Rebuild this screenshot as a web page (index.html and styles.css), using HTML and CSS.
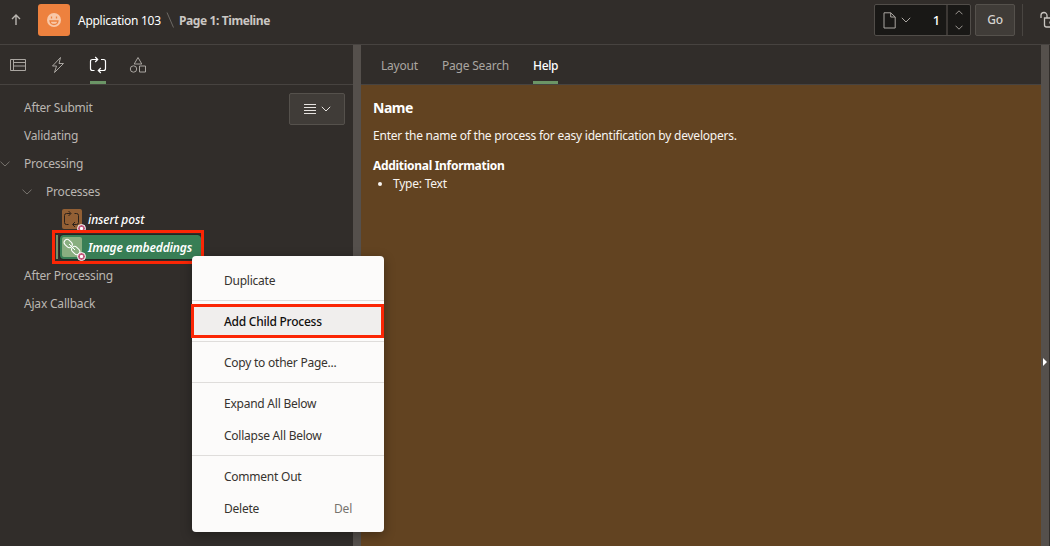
FILE: index.html
```html
<!DOCTYPE html>
<html lang="en">
<head>
<meta charset="utf-8">
<title>Page Designer</title>
<link rel="stylesheet" href="styles.css">
</head>
<body>
<div class="app">
  <header class="topbar">
    <svg class="up" width="12" height="14" viewBox="0 0 12 14"><path d="M6 12V2M2 6l4-4 4 4"/></svg>
    <span class="logo"><svg width="16" height="16" viewBox="0 0 16 16"><circle cx="8" cy="8" r="7" fill="#f8c8a8" stroke="none"/><path d="M5.500 4.500v2M10.500 4.500v2M4 9h8q-.5 3.500-4 3.500T4 9z" fill="none" stroke="#ed813e" stroke-width="1.300"/></svg></span>
    <span class="crumb app-name">Application 103</span>
    <svg class="slash" width="9" height="16" viewBox="0 0 9 16"><path d="M1 .5l6.500 15"/></svg>
    <span class="crumb page-name">Page 1: Timeline</span>
    <div class="picker">
      <span class="picker-main">
        <svg width="13" height="17" viewBox="0 0 13 17"><path d="M1 .8h6.700L12.200 5v11H1zM7.700.8V5h4.500"/></svg>
        <svg width="10" height="6" viewBox="0 0 10 6"><path d="M.8.8L5 5 9.200.8"/></svg>
        <b>1</b>
      </span>
      <span class="steps">
        <svg width="8" height="5" viewBox="0 0 8 5"><path d="M.5 4.300L4 .8l3.500 3.500"/></svg>
        <svg width="8" height="5" viewBox="0 0 8 5"><path d="M.5.7L4 4.200 7.500.7"/></svg>
      </span>
    </div>
    <button class="go">Go</button>
    <span class="divider"></span>
    <svg class="lock" width="17" height="18" viewBox="0 0 17 18"><path d="M1 7V4.500a3 3 0 0 1 6 0V7M4.500 7H16v9H6.500a2 2 0 0 1-2-2zM10 10.500v2"/></svg>
  </header>
  <main class="work">
    <section class="left">
      <nav class="icons">
        <span><svg width="16" height="12" viewBox="0 0 16 12"><path d="M.5.5h15v11H.5zM3.500.5v11M3.500 3.500h12"/><path d="M4 7h11" stroke-width="2" opacity=".5"/></svg></span>
        <span><svg width="16" height="18" viewBox="0 0 16 18"><path d="M10.500 1.500L2.500 10H6.500L4.500 16.500 13.500 7.500H9z"/></svg></span>
        <span class="on"><svg width="18" height="18" viewBox="0 0 18 18"><path d="M8.500 3.500H3.500q-2 0-2 2v7q0 2 2 2h2M12 3.500h2.500q2 0 2 2v7q0 2-2 2h-5M6.200 1L8.700 3.500 6.200 6M11.800 12L9.300 14.500l2.500 2.500" stroke-width="1.200"/></svg></span>
        <span><svg width="18" height="18" viewBox="0 0 18 18"><path d="M9 1.500L12.800 8H5.200z"/><circle cx="4.500" cy="13" r="3.200"/><path d="M10.500 10h6v6h-6z"/></svg></span>
      </nav>
      <div class="tree-wrap">
        <ul class="tree">
          <li>After Submit</li>
          <li>Validating</li>
          <li><svg class="caret" width="10" height="6" viewBox="0 0 10 6"><path d="M.5.7L5 5 9.500.7"/></svg>Processing</li>
          <li class="l2"><svg class="caret" width="10" height="6" viewBox="0 0 10 6"><path d="M.5.7L5 5 9.500.7"/></svg>Processes</li>
          <li class="l3"><span class="node"><span class="tile brown"><svg width="20" height="20" viewBox="0 0 20 20"><path d="M8.500 4.500H4.500q-2 0-2 2v7q0 2 2 2h2M12.500 4.500h2q2 0 2 2v7q0 2-2 2H11M6.500 2l2.500 2.500L6.500 7M13 13l-2.500 2.500L13 18"/></svg><i></i></span><em>insert post</em></span></li>
          <li class="l3"><span class="node sel"><span class="tile green"><svg width="20" height="20" viewBox="0 0 20 20"><rect x="1.700" y="3.500" width="9" height="6" rx="3" transform="rotate(45 6.200 6.500)"/><rect x="9.200" y="10.500" width="9" height="6" rx="3" transform="rotate(45 13.700 13.500)"/><path d="M7 7l6 6"/></svg><i></i></span><em>Image embeddings</em></span></li>
          <li>After Processing</li>
          <li>Ajax Callback</li>
        </ul>
        <button class="list-btn"><svg width="12" height="12" viewBox="0 0 12 12"><path d="M0 1.500h12M0 4.500h12M0 7.500h12M0 10.500h12" /></svg><svg width="10" height="6" viewBox="0 0 10 6"><path d="M.8.8L5 5 9.200.8"/></svg></button>
      </div>
    </section>
    <div class="split"></div>
    <section class="right">
      <nav class="tabs"><span>Layout</span><span>Page Search</span><span class="on">Help</span></nav>
      <article class="help">
        <h2>Name</h2>
        <p>Enter the name of the process for easy identification by developers.</p>
        <h3>Additional Information</h3>
        <ul><li>Type: Text</li></ul>
      </article>
    </section>
    <div class="split end"><svg width="4" height="8" viewBox="0 0 4 8"><path d="M0 0l4 4-4 4z"/></svg></div>
  </main>
</div>
<div class="mark mark-node"></div>
<div class="menu">
  <div class="item">Duplicate</div>
  <hr>
  <div class="item hot">Add Child Process</div>
  <hr>
  <div class="item">Copy to other Page...</div>
  <hr>
  <div class="item">Expand All Below</div>
  <div class="item">Collapse All Below</div>
  <hr>
  <div class="item">Comment Out</div>
  <div class="item">Delete<kbd>Del</kbd></div>
</div>
</body>
</html>
```

FILE: styles.css
```css
* { box-sizing: border-box; }
body { margin: 0; overflow: hidden; background: #312d2a; color: #bab6b1; font: 12px/28px "Noto Sans", "Open Sans", sans-serif; letter-spacing: -0.2px; }
svg { display: block; flex: none; fill: none; stroke: currentColor; }
button { font: inherit; letter-spacing: inherit; }
.app { width: 1050px; height: 546px; display: flex; flex-direction: column; overflow: hidden; }
.topbar { height: 45px; padding-bottom: 4px; flex: none; display: flex; align-items: center; border-bottom: 1px solid #474340; overflow: hidden; }
.up { margin-left: 10px; stroke-width: 1.4; }
.logo { width: 32px; height: 32px; margin-left: 16px; flex: none; border-radius: 3px; background: #ed813e; display: grid; place-items: center; }
.crumb { white-space: nowrap; padding-top: 1px; letter-spacing: -0.28px; }
.app-name { margin-left: 8px; width: 83px; color: #fff; }
.slash { margin: 0 4px 0 5px; color: #6d6965; }
.page-name { font-weight: 700; color: #cbc7c3; letter-spacing: -0.4px; }
.picker { width: 97px; height: 32px; margin-left: auto; display: flex; flex: none; border: 1px solid #514d49; border-radius: 2px; background: #191816; }
.picker-main { flex: 1; display: flex; align-items: center; padding: 0 6px 0 8px; color: #aaa6a1; }
.picker-main svg + svg { margin-left: 5px; }
.picker-main b { margin-left: auto; color: #fff; font-size: 13px; font-weight: 500; }
.steps { width: 24px; border-left: 2px solid #3c3835; display: flex; flex-direction: column; align-items: center; justify-content: space-between; padding: 5px 0; color: #9b9792; }
.go { width: 40px; height: 32px; margin-left: 4px; padding: 0; flex: none; border: 1px solid #55514c; border-radius: 2px; background: #403c38; color: #d7d4d0; font-weight: 500; }
.divider { width: 1px; height: 32px; margin-left: 7px; flex: none; background: #494541; }
.lock { margin: 0 -7px 0 17px; color: #c9c5c1; stroke-width: 1.3; }
.work { flex: 1; display: flex; min-height: 0; }
.left { width: 353px; flex: none; display: flex; flex-direction: column; }
.icons { height: 40px; flex: none; display: flex; gap: 24px; padding-left: 10px; border-bottom: 1px solid #474340; }
.icons span { width: 16px; display: flex; align-items: center; justify-content: center; color: #aaa6a1; }
.icons .on { color: #fff; border-bottom: 3px solid #6b9566; padding-top: 3px; }
.tree-wrap { display: flex; justify-content: space-between; padding: 8px 8px 0 0; }
.tree { list-style: none; margin: 0; padding: 0; }
.tree li { height: 28px; padding: 2px 0 0 24px; display: flex; align-items: center; white-space: nowrap; line-height: 26px; }
.tree .caret { margin: 0 14px 0 -24px; color: #77736e; }
.tree .l2 { padding-left: 46px; }
.tree .l3 { padding: 0 0 0 60px; line-height: 30px; }
.node { height: 24px; display: flex; align-items: center; padding: 0 9px 0 2px; border-radius: 3px; color: #fff; font-weight: 500; }
.node em { padding-top: 1px; letter-spacing: -0.1px; }
.sel { background: #387e55; outline: 1px solid #252320; font-weight: 600; }
.sel em { letter-spacing: -0.15px; }
.tile { width: 20px; height: 20px; margin-right: 6px; position: relative; border-radius: 2px; }
.brown { background: #925f34; color: #2b211a; }
.green { background: #89ae80; color: #fff; }
.tile i { position: absolute; right: -4px; bottom: -4px; width: 9px; height: 9px; border: 1px solid #fff; border-radius: 50%; background: radial-gradient(circle, #fff 1.3px, #c3587c 1.8px); }
.list-btn { width: 56px; height: 32px; border: 1px solid #55514c; border-radius: 2px; background: #403c38; color: #e5e2df; display: flex; align-items: center; justify-content: center; gap: 5px; padding: 0; }
.split { width: 8px; flex: none; background: #55504c; }
.split.end { width: 9px; border-right: 1px solid #312d2a; display: flex; padding: 313px 0 0 2px; }
.split.end svg { fill: #fff; stroke: none; }
.right { flex: 1; min-width: 0; display: flex; flex-direction: column; }
.tabs { height: 40px; flex: none; display: flex; gap: 24px; padding-left: 20px; line-height: 42px; border-bottom: 1px solid #474340; color: #aaa6a1; }
.tabs span { height: 39px; }
.tabs .on { color: #fff; border-bottom: 3px solid #6b9566; font-weight: 500; letter-spacing: -0.35px; }
.help { flex: 1; background: #624321; color: #f8f5f1; padding: 12px; line-height: 18px; letter-spacing: -0.23px; }
.help h2 { margin: 0; font-size: 14px; line-height: 22px; color: #fff; letter-spacing: -0.5px; }
.help p { margin: 8px 0 12px; }
.help h3 { margin: 0; font-size: 12px; line-height: 18px; color: #fff; letter-spacing: -0.3px; }
.help ul { margin: 0; padding-left: 20px; }
.mark { position: absolute; border: 3px solid #fb2605; }
.mark-node { left: 52px; top: 230px; width: 152px; height: 34px; }
.mark-node::before { content: ""; position: absolute; left: 1px; top: 2px; width: 2px; height: 24px; background: #72926a; }
.menu { position: absolute; left: 192px; top: 256px; width: 192px; height: 276px; padding: 8px 0; border-radius: 4px; background: #fcfbfa; box-shadow: 0 3px 12px #0005; color: #37332f; line-height: 34px; letter-spacing: -0.24px; }
.menu .item { height: 32px; padding: 0 32px; display: flex; justify-content: space-between; }
.menu hr { height: 1px; margin: 4px 0; border: 0; background: #dfdddb; }
.menu .hot { height: 34px; margin: -1px 0 -1px -1px; padding-left: 30px; line-height: 30px; border: 3px solid #fb2605; background: #f0eeed; color: #100f0e; font-weight: 500; letter-spacing: -0.25px; }
.menu kbd { font: inherit; color: #76726e; }
```
